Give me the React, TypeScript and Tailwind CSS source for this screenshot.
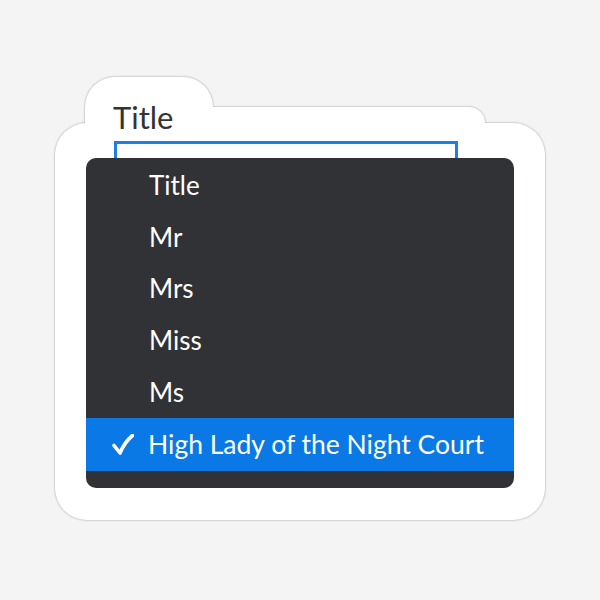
const options = ['Title', 'Mr', 'Mrs', 'Miss', 'Ms', 'High Lady of the Night Court'];
const selected = 'High Lady of the Night Court';

function Check() {
  return (
    <svg width="22" height="21" viewBox="0 0 22 21" fill="none" className="shrink-0">
      <path
        d="M2 11.5 L8 19 C11 12 15 6 20.5 1.5"
        stroke="white"
        strokeWidth="3.6"
        strokeLinecap="round"
        strokeLinejoin="round"
      />
    </svg>
  );
}

export default function App() {
  return (
    <div className="min-h-[600px] w-[600px] bg-[#f4f4f4] pl-[55px] pt-[77px] font-['Lato','Open_Sans',sans-serif]">
      <div className="relative h-[443px] w-[490px]">
        {/* sticker backing */}
        <div
          className="absolute inset-0 flex flex-col [filter:drop-shadow(0_0_1.2px_rgba(0,0,0,0.35))]"
          aria-hidden
        >
          <div className="flex h-[46px] items-end pl-[30px]">
            <div className="h-full w-[128px] rounded-t-[30px] bg-white" />
            <div className="h-[16px] w-[272px] rounded-tr-[20px] bg-white" />
          </div>
          <div className="flex-1 rounded-[32px] bg-white" />
        </div>

        <div className="relative pl-[59px] pt-[22px]">
          <div className="-ml-[1px] text-[31px] leading-[36px] text-[#333335]">Title</div>

          <div className="relative mt-[6px] h-[40px] w-[344px] border-[3px] border-[#1c7fe2]">
            {/* open dropdown */}
            <div className="absolute left-[-31px] top-[14px] w-[428px] rounded-[10px] bg-[#313236] pt-[2px] pb-[17px]">
              {options.map((o) => (
                <div
                  key={o}
                  className={
                    o === selected
                      ? 'flex h-[53px] items-center bg-[#0a79e6] pl-[26px] text-[26.5px] text-white'
                      : 'flex h-[51.6px] items-center pl-[63px] text-[26px] text-white'
                  }
                >
                  {o === selected && <Check />}
                  <span className={o === selected ? 'ml-[14px]' : ''}>{o}</span>
                </div>
              ))}
            </div>
          </div>
        </div>
      </div>
    </div>
  );
}
